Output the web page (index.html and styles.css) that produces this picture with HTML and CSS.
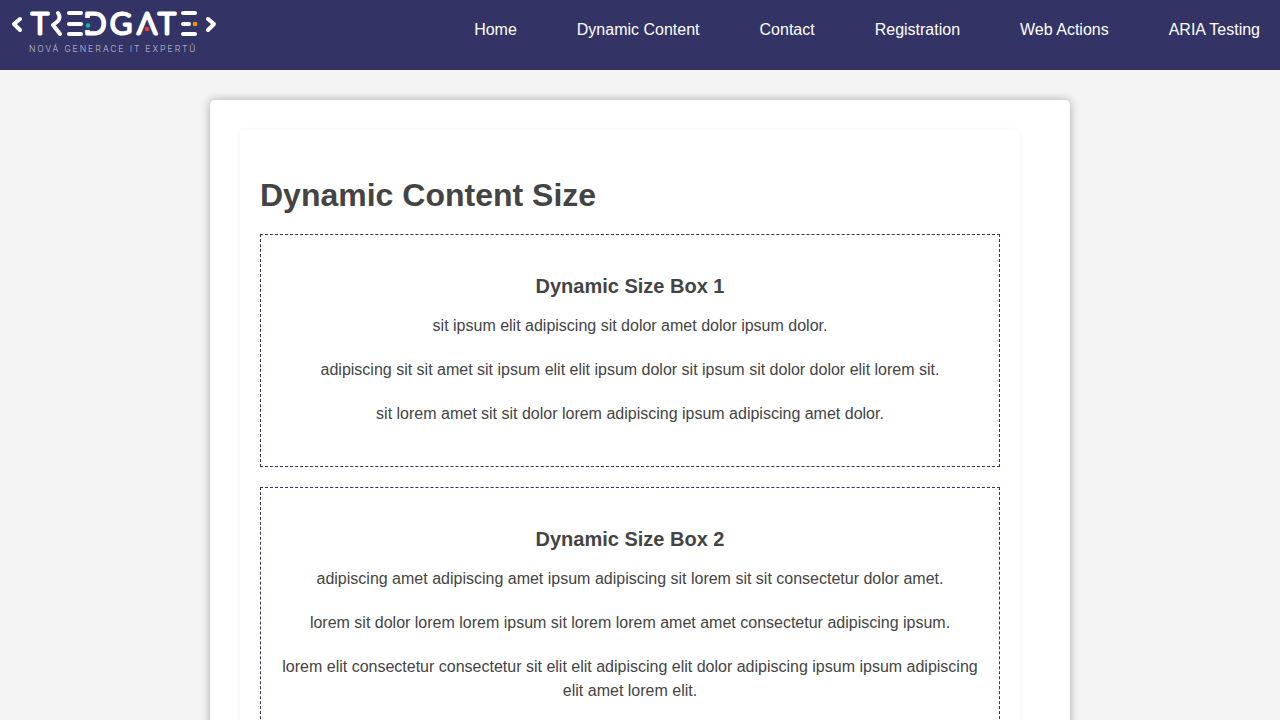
FILE: index.html
```html
<!DOCTYPE html>
<html lang="en">
<head>
<meta charset="utf-8">
<meta name="viewport" content="width=device-width, initial-scale=1">
<title>Dynamic Content Size</title>
<link rel="stylesheet" href="styles.css">
</head>
<body>
<header class="header">
  <a class="logo" href="#" aria-label="Tredgate">
    <svg width="220" height="60" viewBox="0 0 220 60">
      <g class="logo-letters">
        <text x="40" y="34">T</text>
        <text x="95" y="34">D</text>
        <text x="121" y="34">G</text>
        <text x="147" y="34">Λ</text>
        <text x="167" y="34">T</text>
      </g>
      <rect class="logo-gap" x="83" y="18" width="8" height="12"/>
      <g class="logo-bars">
        <polyline points="20,19 14,24 20,30"/>
        <polyline points="208,19 214,24 208,30"/>
        <path d="M58 13Q61 17 58 21L53 25L60 34"/>
        <path d="M69 13H81M69 24H81M69 34H81M183 13H195M183 24H189M183 34H195"/>
      </g>
      <circle class="dot-teal" cx="88" cy="25.500" r="2.300"/>
      <circle class="dot-red" cx="147" cy="29" r="2.300"/>
      <circle class="dot-orange" cx="195" cy="24" r="2.300"/>
      <text class="logo-tagline" x="29" y="52">NOVÁ GENERACE IT EXPERTŮ</text>
    </svg>
  </a>
  <nav class="nav">
    <a href="#">Home</a>
    <a href="#">Dynamic Content</a>
    <a href="#">Contact</a>
    <a href="#">Registration</a>
    <a href="#">Web Actions</a>
    <a href="#">ARIA Testing</a>
  </nav>
</header>
<main class="container">
  <section class="card">
    <h1>Dynamic Content Size</h1>
    <article class="box">
      <h2>Dynamic Size Box 1</h2>
      <p>sit ipsum elit adipiscing sit dolor amet dolor ipsum dolor.</p>
      <p>adipiscing sit sit amet sit ipsum elit elit ipsum dolor sit ipsum sit dolor dolor elit lorem sit.</p>
      <p>sit lorem amet sit sit dolor lorem adipiscing ipsum adipiscing amet dolor.</p>
    </article>
    <article class="box">
      <h2>Dynamic Size Box 2</h2>
      <p>adipiscing amet adipiscing amet ipsum adipiscing sit lorem sit sit consectetur dolor amet.</p>
      <p>lorem sit dolor lorem lorem ipsum sit lorem lorem amet amet consectetur adipiscing ipsum.</p>
      <p>lorem elit consectetur consectetur sit elit elit adipiscing elit dolor adipiscing ipsum ipsum adipiscing elit amet lorem elit.</p>
    </article>
  </section>
</main>
</body>
</html>
```

FILE: styles.css
```css
* {
  box-sizing: border-box;
}

body {
  margin: 0;
  background: #f4f4f4;
  color: #444;
  font: 16px/24px "Liberation Sans", Arial, sans-serif;
}

.header {
  display: flex;
  justify-content: space-between;
  align-items: flex-start;
  min-height: 70px;
  padding-right: 20px;
  background: #333366;
}

.logo,
.logo svg {
  display: block;
}

.logo-bars {
  fill: none;
  stroke: #fff;
  stroke-width: 4px;
  stroke-linecap: round;
  stroke-linejoin: round;
}

.logo-letters {
  fill: #fff;
  stroke: #fff;
  stroke-width: 3px;
  stroke-linejoin: round;
  font: 300 30px Lato, "Open Sans", sans-serif;
  text-anchor: middle;
}

.logo-gap {
  fill: #333366;
}

.dot-teal {
  fill: #12b5aa;
}

.dot-red {
  fill: #e63c32;
}

.dot-orange {
  fill: #f39800;
}

.logo-tagline {
  fill: #c9c9dc;
  font: 300 9px Roboto, sans-serif;
  letter-spacing: 2px;
}

.nav {
  display: flex;
  flex-wrap: wrap;
  gap: 0 60px;
  padding-top: 18px;
}

.nav a {
  color: #fff;
  text-decoration: none;
}

.container {
  max-width: 860px;
  margin: 30px auto;
  padding: 30px;
  border-radius: 5px;
  background: #fff;
  box-shadow: 0 0 10px rgba(0, 0, 0, 0.3);
}

.card {
  margin-right: 20px;
  padding: 20px;
  border-radius: 5px;
  box-shadow: 0 0 5px rgba(0, 0, 0, 0.06);
}

h1 {
  margin: 21px 0 15px;
  font-size: 32px;
  line-height: 48px;
}

.box {
  margin-bottom: 20px;
  padding: 20px;
  border: 1px dashed #333366;
  text-align: center;
}

.box h2 {
  margin: 16px 0 13px;
  font-size: 20px;
  line-height: 30px;
}

.box p {
  margin: 0 0 20px;
}
```
